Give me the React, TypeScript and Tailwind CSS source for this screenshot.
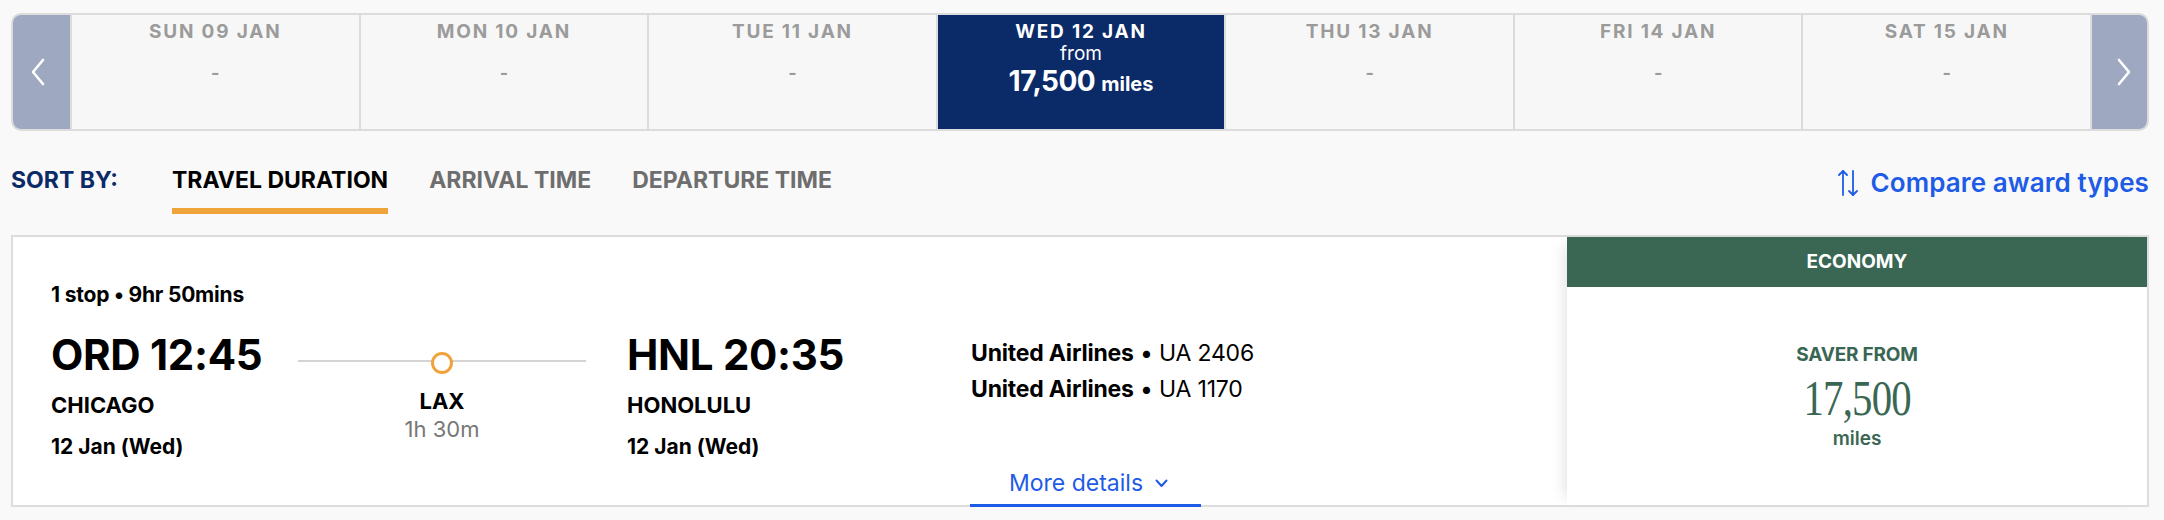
import React from "react";

type Day = { label: string; miles?: string };

const days: Day[] = [
  { label: "SUN 09 JAN" },
  { label: "MON 10 JAN" },
  { label: "TUE 11 JAN" },
  { label: "WED 12 JAN", miles: "17,500" },
  { label: "THU 13 JAN" },
  { label: "FRI 14 JAN" },
  { label: "SAT 15 JAN" },
];

function Chevron({ dir }: { dir: "left" | "right" }) {
  return (
    <svg width="18" height="28" viewBox="0 0 18 28" fill="none">
      <polyline
        points={dir === "left" ? "14,2 4,14 14,26" : "4,2 14,14 4,26"}
        stroke="white"
        strokeWidth="2.6"
        strokeLinecap="round"
        strokeLinejoin="round"
      />
    </svg>
  );
}

function DateStrip() {
  return (
    <div className="flex h-[118px] overflow-hidden rounded-[10px] border-2 border-[#dcdcdc] bg-[#f7f7f7]">
      <button className="flex w-[57px] shrink-0 items-center justify-center bg-[#9ea8c0] pr-[8px]">
        <Chevron dir="left" />
      </button>
      {days.map((d) => {
        const selected = !!d.miles;
        return (
          <div
            key={d.label}
            className={
              selected
                ? "flex min-w-0 flex-1 flex-col items-center border-l-2 border-[#dcdcdc] bg-[#0b2a68] pt-[6px] text-white"
                : "flex min-w-0 flex-1 flex-col items-center border-l-2 border-[#dcdcdc] pt-[6px] text-[#9b9b9b]"
            }
          >
            <div className="text-[19px] font-bold leading-[22px] tracking-[1.8px]">{d.label}</div>
            {selected ? (
              <>
                <div className="text-[19px] leading-[22px]">from</div>
                <div className="leading-[32px]">
                  <span className="text-[28px] font-bold tracking-[-0.5px]">{d.miles}</span>
                  <span className="ml-[6px] text-[20px] font-bold">miles</span>
                </div>
              </>
            ) : (
              <div className="mt-[19px] text-[18px] font-bold leading-[22px]">-</div>
            )}
          </div>
        );
      })}
      <button className="flex w-[57px] shrink-0 items-center justify-center border-l-2 border-[#dcdcdc] bg-[#9ea8c0] pl-[8px]">
        <Chevron dir="right" />
      </button>
    </div>
  );
}

function SortBar() {
  const tabs = ["TRAVEL DURATION", "ARRIVAL TIME", "DEPARTURE TIME"];
  return (
    <div className="mt-[35px] flex items-start justify-between">
      <div className="flex items-start">
        <div className="w-[161px] text-[23px] font-bold leading-[28px] text-[#0b2a68]">SORT BY:</div>
        <div className="flex gap-[41px]">
          {tabs.map((t, i) => (
            <div
              key={t}
              className={
                i === 0
                  ? "border-b-[6px] border-[#f1a33b] pb-[14px] text-[23px] font-bold leading-[28px] text-black"
                  : "border-b-[6px] border-transparent pb-[14px] text-[23px] font-bold leading-[28px] text-[#6e6e6e]"
              }
            >
              {t}
            </div>
          ))}
        </div>
      </div>
      <a className="mt-[2px] flex items-center gap-[13px] text-[#1e5be6]">
        <svg width="20" height="28" viewBox="0 0 20 28" fill="none" stroke="currentColor" strokeWidth="1.8" strokeLinecap="round" strokeLinejoin="round">
          <line x1="5" y1="2" x2="5" y2="26" />
          <polyline points="1,6 5,2 9,6" />
          <line x1="15" y1="2" x2="15" y2="26" />
          <polyline points="11,22 15,26 19,22" />
        </svg>
        <span className="text-[26px] font-semibold leading-[30px] tracking-[0.1px]">Compare award types</span>
      </a>
    </div>
  );
}

function Place({ code, time, city, date }: { code: string; time: string; city: string; date: string }) {
  return (
    <div className="flex flex-col">
      <div className="text-[42px] font-bold leading-[48px] tracking-[-0.3px] text-black">
        {code} {time}
      </div>
      <div className="mt-[13px] text-[22px] font-bold leading-[26px] text-black">{city}</div>
      <div className="mt-[16px] text-[21px] font-bold leading-[26px] text-black">{date}</div>
    </div>
  );
}

function FlightCard() {
  return (
    <div className="mt-[21px] flex h-[272px] border-2 border-[#dddddd] bg-white">
      <div className="flex min-w-0 flex-1 flex-col pl-[38px] pt-[45px]">
        <div className="text-[21px] font-bold leading-[26px] tracking-[-0.2px] text-black">1 stop • 9hr 50mins</div>
        <div className="mt-[23px] flex flex-1">
          <div className="w-[247px] shrink-0">
            <Place code="ORD" time="12:45" city="CHICAGO" date="12 Jan (Wed)" />
          </div>
          <div className="flex w-[288px] shrink-0 flex-col items-center">
            <div className="mt-[29px] h-[2px] w-full bg-[#d4d4d4]" />
            <div className="-mt-[10px] h-[22px] w-[22px] rounded-full border-[3px] border-[#f1a33b] bg-white" />
            <div className="mt-[14px] text-[22px] font-bold leading-[26px] text-black">LAX</div>
            <div className="mt-[2px] text-[22px] leading-[26px] text-[#777777]">1h 30m</div>
          </div>
          <div className="ml-[41px] w-[344px] shrink-0">
            <Place code="HNL" time="20:35" city="HONOLULU" date="12 Jan (Wed)" />
          </div>
          <div className="flex flex-col">
            <div className="mt-[4px] text-[23px] leading-[36px] tracking-[-0.2px] text-black">
              <div>
                <span className="font-bold">United Airlines</span> • UA 2406
              </div>
              <div>
                <span className="font-bold">United Airlines</span> • UA 1170
              </div>
            </div>
            <button className="-mb-[2px] -ml-px mt-auto flex w-[231px] items-center justify-center gap-[12px] border-b-[3px] border-[#1e5be6] pb-[7px] pl-[6px] text-[23px] leading-[28px] text-[#1e5be6]">
              More details
              <svg width="13" height="9" viewBox="0 0 13 9" fill="none" stroke="currentColor" strokeWidth="2" strokeLinecap="round" strokeLinejoin="round">
                <polyline points="1.5,1.5 6.5,7 11.5,1.5" />
              </svg>
            </button>
          </div>
        </div>
      </div>
      <div className="flex w-[580px] shrink-0 flex-col bg-white shadow-[-10px_0_14px_-8px_rgba(0,0,0,0.12)]">
        <div className="flex h-[50px] items-center justify-center bg-[#3a6754] text-[19px] font-bold text-white">
          ECONOMY
        </div>
        <div className="flex flex-1 flex-col items-center justify-center pt-[2px] text-[#3a6754]">
          <div className="text-[19px] font-bold leading-[24px] tracking-[-0.2px]">SAVER FROM</div>
          <div className="mt-[4px] scale-x-[0.8] font-['Liberation_Serif',serif] text-[51px] leading-[54px] tracking-[-1px]">
            17,500
          </div>
          <div className="mt-[2px] text-[19px] font-semibold leading-[24px]">miles</div>
        </div>
      </div>
    </div>
  );
}

export default function App() {
  return (
    <div className="min-h-[520px] w-full bg-[#f9f9f9] pl-[11px] pr-[15px] pt-[13px] font-['Inter',sans-serif]">
      <DateStrip />
      <SortBar />
      <FlightCard />
    </div>
  );
}
